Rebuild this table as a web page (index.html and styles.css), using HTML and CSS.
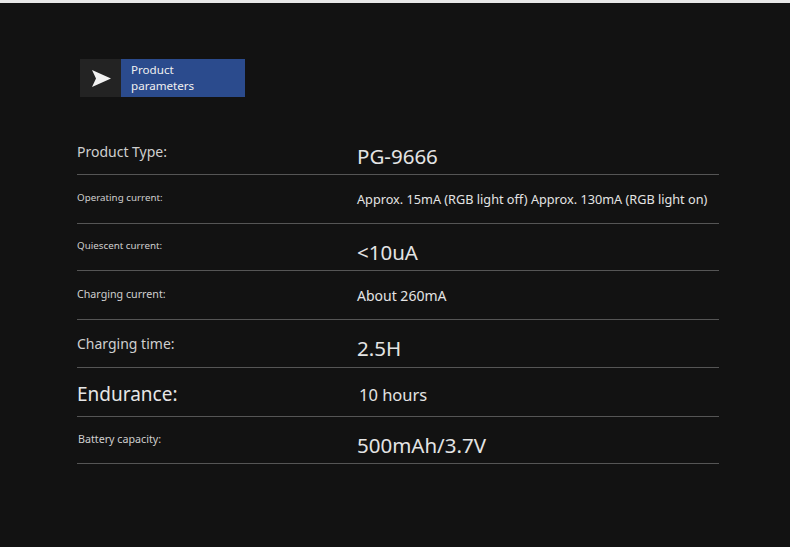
FILE: index.html
```html
<!DOCTYPE html>
<html>
<head>
<meta charset="utf-8">
<link rel="stylesheet" href="styles.css">
</head>
<body>
<div class="page">
  <div class="badge">
    <div class="badge-icon">
      <svg width="41" height="38" viewBox="0 0 41 38"><path d="M12 11 L31 19.5 L12 28 L16 19.5 Z" fill="#f2f2f2"/></svg>
    </div>
    <div class="badge-text"><div class="bl">Product</div><div class="bl">parameters</div></div>
  </div>
  <div class="table">
    <div class="row r1"><div class="lbl l-md">Product Type:</div><div class="val v-lg low">PG-9666</div></div>
    <div class="row r2"><div class="lbl l-xs">Operating current:</div><div class="val v-sm">Approx. 15mA (RGB light off) Approx. 130mA (RGB light on)</div></div>
    <div class="row r3"><div class="lbl l-xs">Quiescent current:</div><div class="val v-lg low">&lt;10uA</div></div>
    <div class="row r4"><div class="lbl l-s">Charging current:</div><div class="val v-md">About 260mA</div></div>
    <div class="row r5"><div class="lbl l-md">Charging time:</div><div class="val v-lg low">2.5H</div></div>
    <div class="row r6"><div class="lbl l-xl">Endurance:</div><div class="val v-xl">10 hours</div></div>
    <div class="row r7"><div class="lbl l-s2">Battery capacity:</div><div class="val v-lg low">500mAh/3.7V</div></div>
  </div>
</div>
</body>
</html>
```

FILE: styles.css
```css
html, body {
  margin: 0;
  padding: 0;
}
body {
  background: #121212;
  border-top: 3px solid #e8e8e8;
  width: 790px;
  height: 544px;
  overflow: hidden;
  font-family: "Noto Sans", "Open Sans", sans-serif;
}
.page {
  padding: 56px 0 0 77px;
  width: 642px;
}
.badge {
  display: flex;
  margin-left: 3px;
  width: 165px;
  height: 38px;
}
.badge-icon {
  width: 41px;
  height: 38px;
  background: #232323;
}
.badge-icon svg { display: block; }
.badge-text {
  flex: 1;
  background: #2b4b8d;
  color: #f0f0f0;
  font-size: 11.6px;
  padding: 3px 0 0 10px;
}
.bl {
  line-height: 16px;
  height: 16px;
}
.table {
  margin-top: 32px;
}
.row {
  display: grid;
  grid-template-columns: 280px 1fr;
  align-items: center;
  border-bottom: 1px solid #555;
  box-sizing: border-box;
}
.r1 { height: 46px; }
.r2 { height: 49px; }
.r3 { height: 47px; }
.r4 { height: 49px; }
.r5 { height: 48px; }
.r6 { height: 49px; }
.r7 { height: 47px; }
.lbl {
  color: #cfcfcf;
  white-space: nowrap;
}
.val {
  color: #e4e4e4;
  white-space: nowrap;
}
.l-xs { font-size: 9.8px; margin-top: -3px; }
.l-s { font-size: 10.7px; margin-top: -3px; }
.l-s2 { font-size: 10.7px; margin-top: -3px; padding-left: 1px; }
.l-md { font-size: 14px; }
.l-xl { font-size: 19px; margin-top: 4px; color: #e6e6e6; }
.v-sm { font-size: 12.7px; }
.v-md { font-size: 14px; }
.v-lg { font-size: 20.5px; }
.v-xl { font-size: 16.5px; padding-left: 2px; margin-top: 4px; }
.low { margin-top: 9px; }
```
